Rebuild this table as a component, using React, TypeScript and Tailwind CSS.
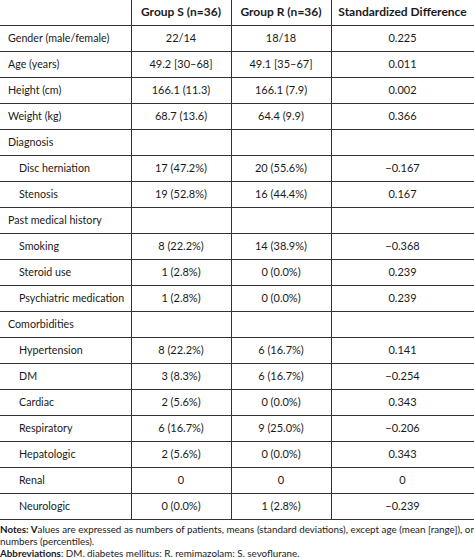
import React from "react";

type Row = { label: string; s?: string; r?: string; d?: string; indent?: boolean };

const rows: Row[] = [
  { label: "Gender (male/female)", s: "22/14", r: "18/18", d: "0.225" },
  { label: "Age (years)", s: "49.2 [30–68]", r: "49.1 [35–67]", d: "0.011" },
  { label: "Height (cm)", s: "166.1 (11.3)", r: "166.1 (7.9)", d: "0.002" },
  { label: "Weight (kg)", s: "68.7 (13.6)", r: "64.4 (9.9)", d: "0.366" },
  { label: "Diagnosis" },
  { label: "Disc herniation", s: "17 (47.2%)", r: "20 (55.6%)", d: "−0.167", indent: true },
  { label: "Stenosis", s: "19 (52.8%)", r: "16 (44.4%)", d: "0.167", indent: true },
  { label: "Past medical history" },
  { label: "Smoking", s: "8 (22.2%)", r: "14 (38.9%)", d: "−0.368", indent: true },
  { label: "Steroid use", s: "1 (2.8%)", r: "0 (0.0%)", d: "0.239", indent: true },
  { label: "Psychiatric medication", s: "1 (2.8%)", r: "0 (0.0%)", d: "0.239", indent: true },
  { label: "Comorbidities" },
  { label: "Hypertension", s: "8 (22.2%)", r: "6 (16.7%)", d: "0.141", indent: true },
  { label: "DM", s: "3 (8.3%)", r: "6 (16.7%)", d: "−0.254", indent: true },
  { label: "Cardiac", s: "2 (5.6%)", r: "0 (0.0%)", d: "0.343", indent: true },
  { label: "Respiratory", s: "6 (16.7%)", r: "9 (25.0%)", d: "−0.206", indent: true },
  { label: "Hepatologic", s: "2 (5.6%)", r: "0 (0.0%)", d: "0.343", indent: true },
  { label: "Renal", s: "0", r: "0", d: "0", indent: true },
  { label: "Neurologic", s: "0 (0.0%)", r: "1 (2.8%)", d: "−0.239", indent: true },
];

export default function App() {
  return (
    <div className="w-[474px] h-[557px] bg-white text-[#1a1a1a] overflow-hidden" style={{ fontFamily: "Lato, 'Open Sans', sans-serif" }}>
      <table className="w-[474px] border-collapse table-fixed">
        <colgroup>
          <col className="w-[131px]" />
          <col className="w-[100px]" />
          <col className="w-[100px]" />
          <col className="w-[143px]" />
        </colgroup>
        <thead>
          <tr className="h-[25px] border-b border-[#333] text-[12px]">
            <th className="border-r border-[#333]"></th>
            <th className="border-r border-[#333] font-bold text-center whitespace-nowrap">Group S (n=36)</th>
            <th className="border-r border-[#333] font-bold text-center whitespace-nowrap">Group R (n=36)</th>
            <th className="border-r border-[#ddd] font-bold text-center whitespace-nowrap">Standardized Difference</th>
          </tr>
        </thead>
        <tbody>
          {rows.map((row, i) => (
            <tr key={i} className="h-[26px] border-b border-[#333]">
              <td className={`border-r border-[#333] whitespace-nowrap text-[10.7px] ${row.indent ? "pl-[19px]" : "pl-[8px]"}`}>{row.label}</td>
              <td className="border-r border-[#333] text-center text-[11px]">{row.s ?? ""}</td>
              <td className="border-r border-[#333] text-center text-[11px]">{row.r ?? ""}</td>
              <td className="border-r border-[#ddd] text-center text-[11px]">{row.d ?? ""}</td>
            </tr>
          ))}
        </tbody>
      </table>
      <div className="text-[9.8px] leading-[12px] pt-[3px] text-[#1a1a1a]">
        <p className="text-justify [text-align-last:justify]">
          <span className="font-bold">Notes: V</span>alues are expressed as numbers of patients, means (standard deviations), except age (mean [range]), or
        </p>
        <p>numbers (percentiles).</p>
        <p>
          <span className="font-bold">Abbreviations</span>: DM, diabetes mellitus; R, remimazolam; S, sevoflurane.
        </p>
      </div>
    </div>
  );
}
